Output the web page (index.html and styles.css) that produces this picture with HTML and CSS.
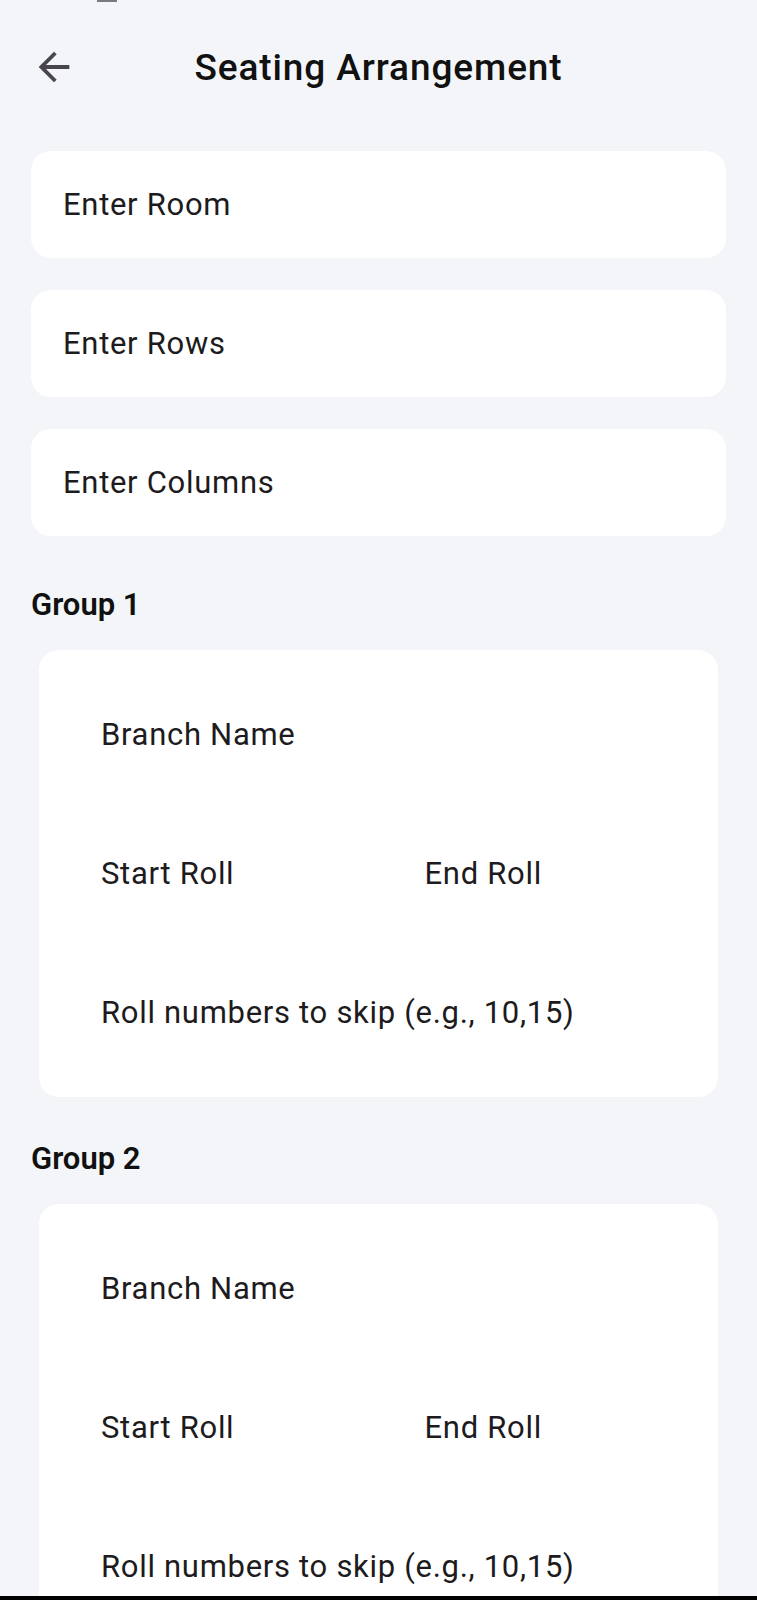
FILE: index.html
```html
<!DOCTYPE html>
<html lang="en">
<head>
<meta charset="utf-8">
<title>Seating Arrangement</title>
<link rel="stylesheet" href="styles.css">
</head>
<body>
<div class="status-mark"></div>
<header class="appbar">
  <div class="appbar-left">
    <svg class="back-icon" viewBox="0 0 24 24" aria-hidden="true"><path d="M20 11H7.83l5.59-5.59L12 4l-8 8 8 8 1.41-1.41L7.83 13H20v-2z"/></svg>
  </div>
  <h1 class="title">Seating Arrangement</h1>
  <div class="appbar-right"></div>
</header>
<main class="content">
  <div class="fields">
    <div class="field">Enter Room</div>
    <div class="field">Enter Rows</div>
    <div class="field">Enter Columns</div>
  </div>

  <h2 class="group-title first">Group 1</h2>
  <section class="group-card">
    <div class="field">Branch Name</div>
    <div class="row">
      <div class="field">Start Roll</div>
      <div class="field">End Roll</div>
    </div>
    <div class="field">Roll numbers to skip (e.g., 10,15)</div>
  </section>

  <h2 class="group-title">Group 2</h2>
  <section class="group-card">
    <div class="field">Branch Name</div>
    <div class="row">
      <div class="field">Start Roll</div>
      <div class="field">End Roll</div>
    </div>
    <div class="field">Roll numbers to skip (e.g., 10,15)</div>
  </section>
</main>
<div class="nav-edge"></div>
</body>
</html>
```

FILE: styles.css
```css
* { box-sizing: border-box; }

html, body {
  margin: 0;
  padding: 0;
}

body {
  background: #f4f5f9;
  font-family: Roboto, "Noto Sans", "Liberation Sans", sans-serif;
  color: #1d1b20;
  overflow: hidden;
}

.status-mark {
  position: absolute;
  left: 97px;
  top: 0;
  width: 20px;
  height: 2px;
  background: #7a7a80;
}

.appbar {
  height: 134px;
  display: grid;
  grid-template-columns: 1fr auto 1fr;
  align-items: center;
}

.appbar-left {
  padding-left: 31px;
  display: flex;
  align-items: center;
}

.back-icon {
  width: 46px;
  height: 46px;
  fill: #49454f;
}

.title {
  margin: 0;
  font-size: 37px;
  font-weight: 500;
  color: #111;
  letter-spacing: 0.9px;
}

.content {
  padding: 17px 31px 0;
}

.fields {
  display: flex;
  flex-direction: column;
  gap: 32px;
}

.field {
  height: 107px;
  background: #fff;
  border-radius: 20px;
  padding-left: 32px;
  display: flex;
  align-items: center;
  font-size: 31px;
  letter-spacing: 0.7px;
  color: #1d1b20;
  white-space: nowrap;
}

.group-title {
  margin: 42px 0 25px;
  height: 40px;
  line-height: 40px;
  font-size: 31px;
  font-weight: 600;
  color: #111;
}

.group-title.first {
  margin-top: 49px;
}

.group-card {
  margin: 0 8px;
  padding: 31px;
  background: #fff;
  border-radius: 20px;
  display: flex;
  flex-direction: column;
  gap: 32px;
}

.group-card .field {
  padding-left: 31px;
}

.row {
  display: grid;
  grid-template-columns: 1fr 1fr;
  gap: 30px;
}

.nav-edge {
  position: fixed;
  left: 0;
  right: 0;
  bottom: 0;
  height: 4px;
  background: #000;
}
```
